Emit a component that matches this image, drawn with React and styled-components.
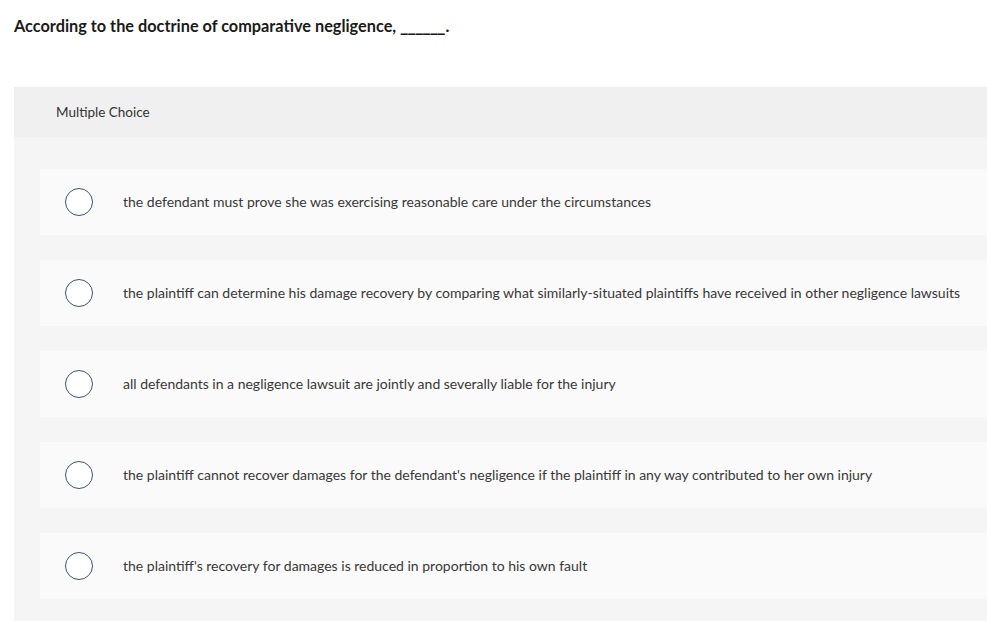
import React from 'react';
import styled, { createGlobalStyle } from 'styled-components';

const GlobalStyle = createGlobalStyle`
body {
    margin: 0;
    background: #ffffff;
    font-family: Lato, "Open Sans", Arial, sans-serif;
    color: #333333;
}
`;

const Page = styled.div`
width: 987px;
height: 621px;
overflow: hidden;
padding-top: 16px;
box-sizing: border-box;
`;

const Question = styled.div`
margin-left: 14px;
font-size: 16.3px;
font-weight: 700;
color: #1a1a1a;
height: 18px;
line-height: 18px;
`;

// lato underscores leave gaps, pull them together
const Blank = styled.span`
letter-spacing: -1px;
margin-right: 1px;
font-size: 18px;
`;

const Panel = styled.div`
margin-top: 53px;
margin-left: 14px;
background-color: #f5f5f5;
`;

const PanelHeader = styled.div`
height: 50px;
display: flex;
align-items: center;
padding-left: 42px;
background-color: #f0f0f0;
font-size: 13.5px;
color: #333333;
`;

const OptionList = styled.div`
display: flex;
flex-direction: column;
gap: 25px;
padding: 32px 0 30px 26px;
`;

const OptionRow = styled.div`
height: 66px;
display: flex;
align-items: center;
padding-left: 25px;
padding-bottom: 1px;
box-sizing: border-box;
background-color: #fafafa;
font-size: 14px;
color: #383838;
white-space: nowrap;
`;

const Radio = styled.span`
width: 26px;
height: 26px;
flex: none;
border-radius: 50%;
border: 1.5px solid #3d5564;
background: #ffffff;
margin-right: 30px;
`;

const options = [
    "the defendant must prove she was exercising reasonable care under the circumstances",
    "the plaintiff can determine his damage recovery by comparing what similarly-situated plaintiffs have received in other negligence lawsuits",
    "all defendants in a negligence lawsuit are jointly and severally liable for the injury",
    "the plaintiff cannot recover damages for the defendant's negligence if the plaintiff in any way contributed to her own injury",
    "the plaintiff's recovery for damages is reduced in proportion to his own fault",
];

const App = () => {
    return (
        <Page>
            <GlobalStyle />
            <Question>According to the doctrine of comparative negligence, <Blank>______</Blank>.</Question>
            <Panel>
                <PanelHeader>Multiple Choice</PanelHeader>
                <OptionList>
                    {options.map((text) => (
                        <OptionRow key={text}>
                            <Radio />
                            {text}
                        </OptionRow>
                    ))}
                </OptionList>
            </Panel>
        </Page>
    );
};

export default App;
